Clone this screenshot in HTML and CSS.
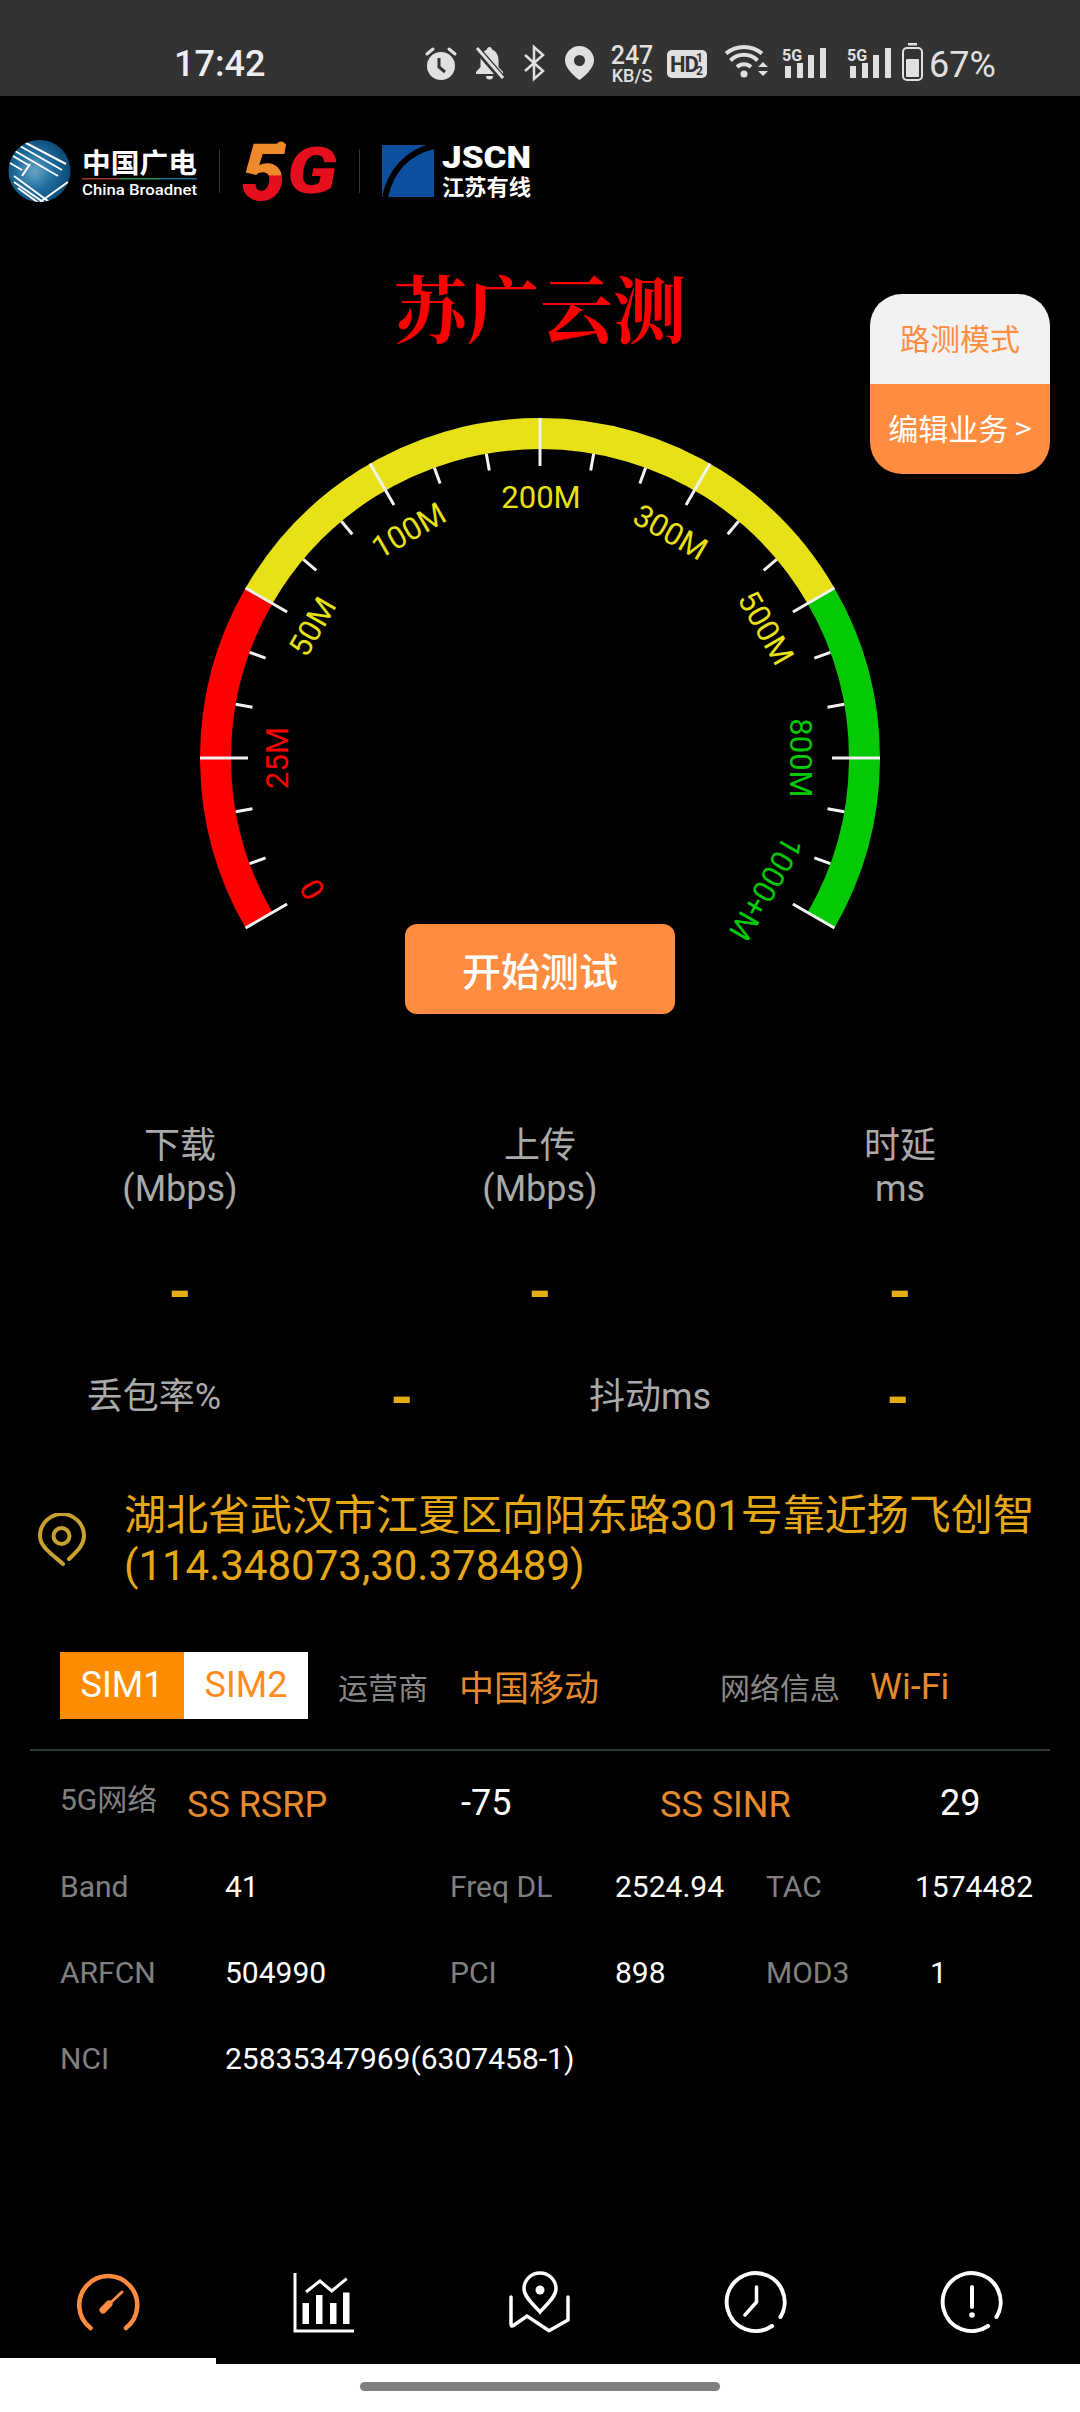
FILE: index.html
```html
<!DOCTYPE html>
<html lang="zh">
<head>
<meta charset="utf-8">
<title>苏广云测</title>
<link rel="stylesheet" href="styles.css">
</head>
<body>
<div class="page">
  <header class="status">
    <span class="time">17:42</span>
    <svg class="si si-alarm" width="32" height="34" viewBox="0 0 32 34"><circle cx="16" cy="20" r="14" fill="#e0e0e0"/><path d="M14 12V21L20 26" fill="none" stroke="#333" stroke-width="3"/><path d="M2 8L8 3M30 8L24 3" stroke="#e0e0e0" stroke-width="3" stroke-linecap="round"/></svg>
    <svg class="si si-bell" width="31" height="34" viewBox="0 0 31 34"><path d="M15.5 1C14 1 13 2 13 3.500C9 5 6.500 9 6.500 14V21L2 26V28H29V26L24.500 21V14C24.500 9 22 5 18 3.500C18 2 17 1 15.500 1Z" fill="#e0e0e0"/><path d="M12 30H19A3.500 3.500 0 0 1 12 30Z" fill="#e0e0e0"/><path d="M3 3L28 32" stroke="#333" stroke-width="7"/><path d="M3 2L29 32" stroke="#e0e0e0" stroke-width="3"/></svg>
    <svg class="si si-bt" width="22" height="34" viewBox="0 0 22 34"><path d="M2 9L20 25L11 33V1L20 9L2 25" fill="none" stroke="#e0e0e0" stroke-width="2.500"/></svg>
    <svg class="si si-pin" width="29" height="34" viewBox="0 0 29 34"><path fill-rule="evenodd" d="M14.500 0A14.500 14.500 0 0 0 0 14.500C0 24 14.500 34 14.500 34S29 24 29 14.500A14.500 14.500 0 0 0 14.500 0ZM14.500 9A5.500 5.500 0 1 1 14.500 20A5.500 5.500 0 1 1 14.500 9Z" fill="#e0e0e0"/></svg>
    <span class="speed"><span class="speed-num">247</span><span class="speed-unit">KB/S</span></span>
    <svg class="si si-hd" width="40" height="28" viewBox="0 0 40 28"><rect width="40" height="28" rx="5" fill="#e0e0e0"/><text x="3" y="22" class="hd-text">HD</text><text x="29" y="12" class="hd-small">1</text><text x="29" y="25" class="hd-small">2</text></svg>
    <svg class="si si-wifi" width="45" height="36" viewBox="0 0 45 36"><circle cx="20" cy="30" r="3.500" fill="#e0e0e0"/><path d="M13 23A10 10 0 0 1 27 23M6.500 16.500A19 19 0 0 1 33.500 16.500M2 9.500A28 28 0 0 1 38 9.500" fill="none" stroke="#e0e0e0" stroke-width="4"/><path d="M34 23L39 18L44 23ZM34 27H44L39 32Z" fill="#e0e0e0"/></svg>
    <svg class="si si-sig" width="47" height="34" viewBox="0 0 47 34"><text x="1" y="15" class="sig-text">5G</text><rect x="4" y="20" width="6" height="12" fill="#e0e0e0"/><rect x="16" y="17" width="6" height="15" fill="#e0e0e0"/><rect x="27" y="9" width="6" height="23" fill="#e0e0e0"/><rect x="39" y="2" width="6" height="30" fill="#e0e0e0"/></svg>
    <svg class="si si-sig2" width="47" height="34" viewBox="0 0 47 34"><text x="1" y="15" class="sig-text">5G</text><rect x="4" y="20" width="6" height="12" fill="#e0e0e0"/><rect x="16" y="17" width="6" height="15" fill="#e0e0e0"/><rect x="27" y="9" width="6" height="23" fill="#e0e0e0"/><rect x="39" y="2" width="6" height="30" fill="#e0e0e0"/></svg>
    <svg class="si si-bat" width="21" height="38" viewBox="0 0 21 38"><rect x="6" y="0" width="9" height="2.500" fill="#e0e0e0"/><rect x="1" y="5" width="19" height="32" rx="4" fill="none" stroke="#e0e0e0" stroke-width="2"/><rect x="4" y="16" width="13" height="18" rx="1" fill="#e0e0e0"/></svg>
    <span class="batt">67%</span>
  </header>

  <div class="logos">
    <svg width="540" height="62" viewBox="0 0 540 62">
      <defs>
        <radialGradient id="globe" cx="0.42" cy="0.5" r="0.6"><stop offset="0" stop-color="#6aa6c6"/><stop offset="0.5" stop-color="#1f6d9e"/><stop offset="1" stop-color="#0a4670"/></radialGradient>
        <clipPath id="globe-clip"><ellipse cx="39.500" cy="31" rx="31" ry="31"/></clipPath>
        <linearGradient id="five" x1="0" y1="0" x2="0" y2="1"><stop offset="0.52" stop-color="#ee8a2a"/><stop offset="0.53" stop-color="#e60f1e"/></linearGradient>
      </defs>
      <ellipse cx="39.500" cy="31" rx="31" ry="31" fill="url(#globe)"/>
      <g clip-path="url(#globe-clip)" fill="none" stroke="#fff" stroke-width="2">
        <path d="M24 2L66 24M20 6L62 30M15 11L58 36M13 16L30 26M10 23L22 30"/>
        <path d="M14 36L52 64M14 42L46 64M18 48L40 64M40 62L68 42M22 36L30 24"/>
      </g>
      <text x="82" y="33" class="logo-cn" textLength="115" lengthAdjust="spacingAndGlyphs">中国广电</text>
      <rect x="82" y="38" width="38" height="1.500" fill="#a33a3a"/><rect x="120" y="38" width="39" height="1.500" fill="#2e8b57"/><rect x="159" y="38" width="38" height="1.500" fill="#1d6a9c"/>
      <text x="82" y="55" class="logo-en" textLength="115" lengthAdjust="spacingAndGlyphs">China Broadnet</text>
      <rect x="219" y="9" width="1" height="44" fill="#333"/>
      <circle cx="281" cy="6" r="4.500" fill="#ee8a2a"/>
      <text x="241" y="60" class="logo-5g logo-five">5</text>
      <text x="287" y="53" class="logo-5g logo-g" textLength="50" lengthAdjust="spacingAndGlyphs">G</text>
      <rect x="359" y="9" width="1" height="44" fill="#333"/>
      <rect x="382" y="5" width="52" height="52" fill="#0b4f9e"/>
      <path d="M434 6C408 12 391 30 385 57" fill="none" stroke="#000" stroke-width="6"/>
      <text x="442" y="28" class="logo-jscn" textLength="89" lengthAdjust="spacingAndGlyphs">JSCN</text>
      <text x="442" y="55" class="logo-js-cn" textLength="89" lengthAdjust="spacingAndGlyphs">江苏有线</text>
    </svg>
  </div>

  <h1 class="title">苏广云测</h1>

  <section class="hero">
    <div class="side">
      <div class="side-top">路测模式</div>
      <div class="side-bottom">编辑业务 &gt;</div>
    </div>
    <svg class="gauge" width="1080" height="530" viewBox="0 0 1080 530">
      <defs>
        <line id="maj" x1="0" y1="-340" x2="0" y2="-292" stroke="#f2f2f2" stroke-width="3"/>
        <line id="min" x1="0" y1="-309" x2="0" y2="-292" stroke="#f2f2f2" stroke-width="3"/>
      </defs>
      <g transform="translate(540 348)">
        <path d="M-281 162.250A324.500 324.500 0 0 1 -281 -162.250" fill="none" stroke="#ff0000" stroke-width="31"/>
        <path d="M-281 -162.250A324.500 324.500 0 0 1 281 -162.250" fill="none" stroke="#e8e118" stroke-width="31"/>
        <path d="M281 -162.250A324.500 324.500 0 0 1 281 162.250" fill="none" stroke="#06c906" stroke-width="31"/>
        <use href="#maj" transform="rotate(-120)"/><use href="#min" transform="rotate(-110)"/><use href="#min" transform="rotate(-100)"/>
        <use href="#maj" transform="rotate(-90)"/><use href="#min" transform="rotate(-80)"/><use href="#min" transform="rotate(-70)"/>
        <use href="#maj" transform="rotate(-60)"/><use href="#min" transform="rotate(-50)"/><use href="#min" transform="rotate(-40)"/>
        <use href="#maj" transform="rotate(-30)"/><use href="#min" transform="rotate(-20)"/><use href="#min" transform="rotate(-10)"/>
        <use href="#maj"/><use href="#min" transform="rotate(10)"/><use href="#min" transform="rotate(20)"/>
        <use href="#maj" transform="rotate(30)"/><use href="#min" transform="rotate(40)"/><use href="#min" transform="rotate(50)"/>
        <use href="#maj" transform="rotate(60)"/><use href="#min" transform="rotate(70)"/><use href="#min" transform="rotate(80)"/>
        <use href="#maj" transform="rotate(90)"/><use href="#min" transform="rotate(100)"/><use href="#min" transform="rotate(110)"/>
        <use href="#maj" transform="rotate(120)"/>
        <text class="gl gl-r" y="-252" transform="rotate(-120)">0</text>
        <text class="gl gl-r" y="-252" transform="rotate(-90)">25M</text>
        <text class="gl gl-y" y="-252" transform="rotate(-60)">50M</text>
        <text class="gl gl-y" y="-252" transform="rotate(-30)">100M</text>
        <text class="gl gl-y" y="-250" x="1">200M</text>
        <text class="gl gl-y" y="-250" transform="rotate(30)">300M</text>
        <text class="gl gl-y" y="-250" transform="rotate(60)">500M</text>
        <text class="gl gl-g" y="-250" transform="rotate(90)">800M</text>
        <text class="gl gl-g" y="-250" transform="rotate(120)">1000+M</text>
      </g>
    </svg>
    <div class="start">开始测试</div>
  </section>

  <section class="metrics">
    <div class="metric"><div>下载</div><div>(Mbps)</div><div class="dash">-</div></div>
    <div class="metric"><div>上传</div><div>(Mbps)</div><div class="dash">-</div></div>
    <div class="metric"><div>时延</div><div>ms</div><div class="dash">-</div></div>
  </section>

  <section class="metrics2">
    <div>丢包率%</div><div class="dash">-</div>
    <div>抖动ms</div><div class="dash">-</div>
  </section>

  <section class="addr">
    <svg class="addr-pin" width="49" height="54" viewBox="0 0 49 54"><path d="M25 51C15 42 2 34 2 23A22 22 0 1 1 46 23C46 33 37 40 31 46" fill="none" stroke="#c9a131" stroke-width="4" stroke-linecap="round"/><circle cx="23.500" cy="23" r="8" fill="none" stroke="#c9a131" stroke-width="4"/></svg>
    <p class="addr-text">湖北省武汉市江夏区向阳东路301号靠近扬飞创智(114.348073,30.378489)</p>
  </section>

  <section class="simrow">
    <div class="sim sim-on">SIM1</div>
    <div class="sim sim-off">SIM2</div>
    <span class="net-label op-label">运营商</span>
    <span class="net-val op-val">中国移动</span>
    <span class="net-label info-label">网络信息</span>
    <span class="net-val wifi-val">Wi-Fi</span>
  </section>
  <div class="rule"></div>

  <section class="cell-head">
    <div class="ch-net">5G网络</div>
    <div class="ch-key">SS RSRP</div>
    <div class="ch-val">-75</div>
    <div class="ch-key">SS SINR</div>
    <div class="ch-val">29</div>
  </section>
  <section class="cell-grid">
    <div class="k">Band</div><div class="v">41</div><div class="k">Freq DL</div><div class="v">2524.94</div><div class="k">TAC</div><div class="v">1574482</div>
    <div class="k">ARFCN</div><div class="v">504990</div><div class="k">PCI</div><div class="v">898</div><div class="k">MOD3</div><div class="v v-ind">1</div>
    <div class="k">NCI</div><div class="v v-wide">25835347969(6307458-1)</div>
  </section>

  <nav class="tabs">
    <div class="tab tab-on"><svg width="64" height="64" viewBox="0 0 64 64"><path d="M14.500 58A29 29 0 1 1 50 58" fill="none" stroke="#ff8c3f" stroke-width="4.500" stroke-linecap="round"/><path d="M30 37L46 22" stroke="#ff8c3f" stroke-width="3" stroke-linecap="round"/><path d="M27 40L33 34" stroke="#ff8c3f" stroke-width="7" stroke-linecap="round"/></svg></div>
    <div class="tab"><svg width="64" height="64" viewBox="0 0 64 64"><path d="M3 3V61H62" fill="none" stroke="#fff" stroke-width="3"/><path d="M14 22L28 11L39.700 21L54.700 8.700" fill="none" stroke="#fff" stroke-width="3"/><rect x="10.500" y="33" width="6.500" height="21" fill="#fff"/><rect x="24" y="25" width="6.500" height="29" fill="#fff"/><rect x="38" y="33" width="6.500" height="21" fill="#fff"/><rect x="51" y="22.500" width="6.500" height="31.500" fill="#fff"/></svg></div>
    <div class="tab"><svg width="64" height="64" viewBox="0 0 64 64"><path d="M32 3C23 3 16 10 16 19C16 27 27 36 32 42C37 36 48 27 48 19C48 10 41 3 32 3Z" fill="none" stroke="#fff" stroke-width="3.500"/><circle cx="32" cy="20" r="4.500" fill="#fff"/><path d="M3 27V54Q3 57 5.500 55.500L19 46L41 60.700L60 50V27" fill="none" stroke="#fff" stroke-width="3.500" stroke-linecap="round"/></svg></div>
    <div class="tab"><svg width="64" height="64" viewBox="0 0 64 64"><path d="M48 56A29 29 0 1 1 56.500 47" fill="none" stroke="#fff" stroke-width="4" stroke-linecap="round"/><path d="M32.500 17V32L21 45" fill="none" stroke="#fff" stroke-width="3.500" stroke-linecap="round"/></svg></div>
    <div class="tab"><svg width="64" height="64" viewBox="0 0 64 64"><path d="M48 56A29 29 0 1 1 56.500 47" fill="none" stroke="#fff" stroke-width="4" stroke-linecap="round"/><path d="M32 17V37" stroke="#fff" stroke-width="4" stroke-linecap="round"/><circle cx="32" cy="45" r="2.800" fill="#fff"/></svg></div>
  </nav>
</div>
<footer class="home"><div class="home-bar"></div></footer>
</body>
</html>
```
FILE: styles.css
```css
* { box-sizing: border-box; margin: 0; padding: 0; }
html, body { background: #fff; }
body { width: 1080px; height: 2412px; overflow: hidden; font-family: Roboto, "Noto Sans CJK SC", sans-serif; }
.page { background: #000; height: 2364px; display: flow-root; }

.status { height: 96px; background: #333; display: flex; align-items: flex-start; color: #e0e0e0; padding-left: 174px; }
.time { font-size: 36px; font-weight: 500; line-height: 40px; margin-top: 44px; color: #eee; width: 91px; }
.si { flex: none; display: block; margin-top: 46px; overflow: visible; }
.si-alarm { margin-left: 160px; }
.si-bell { margin-left: 17px; }
.si-bt { margin-left: 18px; }
.si-pin { margin-left: 20px; }
.speed { margin-left: 16px; margin-top: 44px; width: 44px; display: flex; flex-direction: column; align-items: center; font-weight: 500; }
.speed-num { font-size: 25px; line-height: 23px; }
.speed-unit { font-size: 18px; line-height: 17px; }
.si-hd { margin-left: 13px; margin-top: 50px; }
.hd-text { font: 700 22px Roboto, sans-serif; fill: #333; letter-spacing: -1px; }
.hd-small { font: 700 12px Roboto, sans-serif; fill: #333; }
.si-wifi { margin-left: 17px; margin-top: 44px; }
.si-sig { margin-left: 12px; }
.si-sig2 { margin-left: 18px; }
.sig-text { font: 700 16px Roboto, sans-serif; fill: #e0e0e0; }
.si-bat { margin-left: 9px; margin-top: 43px; }
.batt { font-size: 36px; line-height: 40px; margin-top: 45px; margin-left: 6px; }

.logos { height: 106px; padding-top: 44px; }
.logos svg { display: block; overflow: visible; }
.logo-cn { font: 700 27px "Noto Sans CJK SC", sans-serif; fill: #fff; }
.logo-en { font: 500 15px Roboto, sans-serif; fill: #fff; }
.logo-5g { font: italic 900 80px Roboto, sans-serif; }
.logo-five { fill: url(#five); }
.logo-g { fill: #e60f1e; font-size: 65px; }
.logo-jscn { font: 900 32px Roboto, sans-serif; fill: #fff; }
.logo-js-cn { font: 700 22px "Noto Sans CJK SC", sans-serif; fill: #fff; }

.title { margin-top: 54px; height: 104px; text-align: center; font: 700 73px/100px "Noto Serif CJK SC", "Source Han Serif SC", "Noto Sans CJK SC", serif; color: #ff0000; }

.hero { position: relative; margin-top: 50px; display: flex; flex-direction: column; align-items: center; }
.gauge { display: block; }
.gl { font: 400 31px Roboto, sans-serif; text-anchor: middle; }
.gl-r { fill: #f00; }
.gl-y { fill: #e8e118; }
.gl-g { fill: #06c906; }
.side { position: absolute; top: -116px; right: 30px; width: 180px; height: 180px; border-radius: 32px; overflow: hidden; font: 400 30px/87px "Noto Sans CJK SC", sans-serif; text-align: center; }
.side-top { height: 90px; background: #f2f2f2; color: #ff8c3f; }
.side-bottom { height: 90px; background: #ff8c3f; color: #fff; }
.start { margin-top: -16px; position: relative; width: 270px; height: 90px; border-radius: 12px; background: #ff8c3f; color: #fff; font: 500 39px/90px "Noto Sans CJK SC", sans-serif; text-align: center; }

.metrics { margin-top: 111px; display: grid; grid-template-columns: repeat(3, 360px); text-align: center; color: #aaa; font-size: 36px; line-height: 43px; }
.dash { color: #e6ac14; font-size: 58px; font-weight: 700; line-height: 60px; text-align: center; }
.metric .dash { margin-top: 50px; }
.metrics2 { margin: 54px 0 0 30px; display: grid; grid-template-columns: repeat(4, 248px); text-align: center; color: #aaa; font-size: 36px; line-height: 44px; }
.metrics2 .dash { line-height: 44px; }

.addr { margin-top: 72px; display: flex; align-items: flex-start; padding-left: 38px; }
.addr-pin { flex: none; margin-top: 22px; }
.addr-text { margin-left: 37px; width: 915px; font-size: 42px; line-height: 50px; color: #e6a817; }

.simrow { margin-top: 61px; padding-left: 60px; height: 67px; display: flex; align-items: center; }
.sim { width: 124px; height: 67px; font-size: 36px; line-height: 67px; text-align: center; flex: none; }
.sim-on { background: #ff8c00; color: #fff; }
.sim-off { background: #fff; color: #ff8c1a; }
.net-label { color: #888; font-size: 30px; flex: none; }
.net-val { color: #e68a2e; font-size: 36px; flex: none; }
.op-label { margin-left: 30px; }
.op-val { margin-left: 31px; font-size: 35px; }
.info-label { margin-left: 121px; }
.wifi-val { margin-left: 30px; position: relative; top: 1px; }

.rule { margin: 30px 30px 0; height: 2px; background: #2a3836; }

.cell-head { padding: 30px 0 0 60px; height: 92px; display: grid; grid-template-columns: 127px 274px 199px 280px 100px; align-items: start; }
.ch-net { color: #808080; font-size: 30px; line-height: 38px; }
.ch-key { color: #e68a2e; font-size: 36px; line-height: 48px; }
.ch-val { color: #fff; font-size: 36px; line-height: 44px; }

.cell-grid { padding-left: 60px; display: grid; grid-template-columns: 165px 225px 165px 151px 149px 165px; grid-auto-rows: 86px; align-items: center; font-size: 30px; }
.k { color: #808080; }
.v { color: #fff; }
.v-ind { padding-left: 15px; }
.v-wide { grid-column: span 5; }

.tabs { margin-top: 169px; display: grid; grid-template-columns: repeat(5, 216px); }
.tab { height: 94px; display: flex; justify-content: center; align-items: flex-start; }
.tab-on { border-bottom: 6px solid #fff; height: 94px; }

.home { height: 48px; padding: 18px 360px 0; }
.home-bar { height: 9px; border-radius: 5px; background: #808080; }
```
